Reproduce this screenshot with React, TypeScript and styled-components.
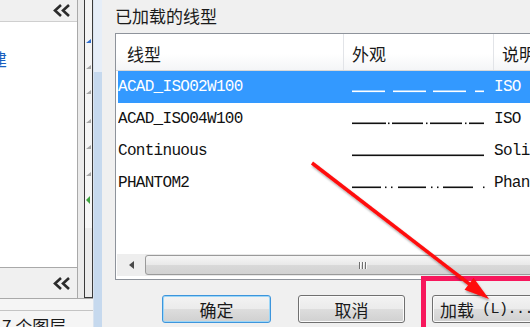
import React from "react";
import styled, { createGlobalStyle } from "styled-components";

const GlobalStyle = createGlobalStyle`
  html, body {
    margin: 0;
    padding: 0;
    background: #f0f0f0;
  }
  body {
    font-family: "Noto Sans CJK SC", "Noto Sans", sans-serif;
    color: #1a1a1a;
  }
`;

const Screen = styled.div`
  position: relative;
  width: 530px;
  height: 327px;
  overflow: hidden;
  display: flex;
  background: #f0f0f0;
`;

/* ---------- left side (layer panel) ---------- */

const Sidebar = styled.div`
  width: 93px;
  flex-shrink: 0;
  display: flex;
  flex-direction: column;
`;

const SideMain = styled.div`
  display: flex;
  height: 298px;
`;

const Panel = styled.div`
  width: 77px;
  display: flex;
  flex-direction: column;
  border-right: 1px solid #a9a9a9;
`;

const PanelBar = styled.div<{ $top?: boolean }>`
  height: ${(p) => (p.$top ? 21 : 30)}px;
  display: flex;
  justify-content: flex-end;
  align-items: ${(p) => (p.$top ? "flex-start" : "center")};
  padding-right: 5px;
  background: #f0f0f0;
`;

const PanelList = styled.div`
  flex: 1;
  background: #fff;
  border-top: 1px solid #cfcfcf;
  border-bottom: 1px solid #a9a9a9;
  overflow: hidden;
`;

const ClippedName = styled.div`
  margin: 27px 0 0 -10px;
  font-size: 17px;
  line-height: 20px;
  color: #1a5fc0;
`;

const Gutter = styled.div`
  width: 6px;
  background: #ebebeb;
`;

const Ruler = styled.div`
  width: 7px;
  border: 1px solid #3a3a3a;
  border-top: none;
  background: linear-gradient(to bottom, #f4f4f4 0, #f7f7f7 228px, #ececec 228px);
`;

const SideBottom = styled.div`
  flex: 1;
  border-top: 1px solid #a9a9a9;
  padding-top: 11px;
  background: #f5f5f5;
`;

const Status = styled.div`
  border-top: 1px solid #c4c4c4;
  padding: 5px 0 0 2px;
  font-size: 17px;
  line-height: 20px;
  white-space: nowrap;
`;

const BlueStrip = styled.div`
  width: 8px;
  flex-shrink: 0;
  border-left: 1px solid #d9e3ef;
  background: linear-gradient(to bottom, #e6eef8 0, #e6eef8 72px, #c6d9ee 72px);
`;

/* ---------- dialog ---------- */

const Dialog = styled.div`
  flex: 1;
  min-width: 0;
  display: flex;
  flex-direction: column;
  padding-left: 13px;
`;

const Title = styled.div`
  height: 33px;
  line-height: 32px;
  font-size: 17px;
  white-space: nowrap;
`;

const ListBox = styled.div`
  width: 520px;
  height: 247px;
  box-sizing: border-box;
  flex-shrink: 0;
  border: 1px solid #8e939b;
  background: #fff;
  display: flex;
  flex-direction: column;
  padding-bottom: 3px;
`;

const HeaderRow = styled.div`
  display: grid;
  grid-template-columns: 227px 150px 1fr;
  height: 36px;
  border-bottom: 1px solid #d8d8d8;
  background: linear-gradient(to bottom, #ffffff 0%, #ffffff 55%, #f4f5f7 100%);
`;

const HeadCell = styled.div<{ $pad: number; $sep?: boolean }>`
  display: flex;
  align-items: center;
  padding-left: ${(p) => p.$pad}px;
  padding-top: 2px;
  font-size: 17px;
  white-space: nowrap;
  border-left: ${(p) => (p.$sep ? "1px solid #e2e4e8" : "none")};
`;

const Row = styled.div<{ $selected?: boolean }>`
  display: grid;
  grid-template-columns: 225px 150px 1fr;
  height: 32px;
  margin-left: 2px;
  background: ${(p) => (p.$selected ? "#3399ff" : "transparent")};
  color: ${(p) => (p.$selected ? "#ffffff" : "#111111")};
  font-family: "Liberation Mono", "DejaVu Sans Mono", monospace;
  font-size: 16px;
  letter-spacing: -0.7px;
  white-space: nowrap;
`;

const Cell = styled.div<{ $pad?: number }>`
  display: flex;
  align-items: center;
  padding-left: ${(p) => p.$pad ?? 0}px;
  overflow: hidden;
`;

const Filler = styled.div`
  flex: 1;
`;

const HScroll = styled.div`
  height: 22px;
  display: flex;
  background: #e9e9e9;
  margin-left: 1px;
`;

const ArrowButton = styled.div`
  width: 28px;
  display: flex;
  align-items: center;
  justify-content: center;
  background: #eeeeee;
`;

const Thumb = styled.div`
  width: 434px;
  flex-shrink: 0;
  margin: 1px 0;
  box-sizing: border-box;
  border: 1px solid #9a9a9a;
  border-radius: 3px;
  background: linear-gradient(to bottom, #f6f6f6 0%, #e9e9e9 50%, #d9d9d9 51%, #d2d2d2 100%);
  display: flex;
  align-items: center;
  justify-content: center;
`;

const Grip = styled.div`
  display: flex;
  gap: 2px;
  span {
    width: 1px;
    height: 7px;
    background: #6f6f6f;
    box-shadow: 1px 0 0 #fafafa;
  }
`;

const ButtonRow = styled.div`
  display: flex;
  gap: 27px;
  margin-top: 15px;
  padding-left: 47px;
`;

const Button = styled.div<{ $w: number; $default?: boolean; $start?: boolean }>`
  width: ${(p) => p.$w}px;
  height: 28px;
  flex-shrink: 0;
  box-sizing: border-box;
  display: flex;
  align-items: center;
  justify-content: ${(p) => (p.$start ? "flex-start" : "center")};
  padding-left: ${(p) => (p.$start ? 7 : 0)}px;
  border: 1px solid ${(p) => (p.$default ? "#3d95dc" : "#707070")};
  border-radius: 3px;
  box-shadow: ${(p) =>
    p.$default ? "inset 0 0 0 1px #9cd6f7" : "inset 0 0 0 1px #fbfbfb"};
  background: linear-gradient(to bottom, #f3f3f3 0%, #ebebeb 50%, #dddddd 51%, #d0d0d0 100%);
  font-size: 17px;
  white-space: nowrap;
`;

const Mono = styled.span`
  font-family: "Liberation Mono", "DejaVu Sans Mono", monospace;
  font-size: 15px;
  margin-left: 8px;
  letter-spacing: -0.5px;
`;

const Overlay = styled.svg`
  position: absolute;
  left: 0;
  top: 0;
  pointer-events: none;
`;

/* ---------- small drawings ---------- */

const DoubleChevron = () => (
  <svg width="19" height="13" viewBox="0 0 19 13">
    <path d="M8 1 L2 6.5 L8 12 M16 1 L10 6.5 L16 12" fill="none" stroke="#2b2b2b" strokeWidth="2.6" />
  </svg>
);

const rulerMarks = [42, 68, 93, 122, 148, 175];

const RulerMarks = () => (
  <svg width="7" height="298" viewBox="0 0 7 298">
    {rulerMarks.map((y, i) => (
      <polygon
        key={y}
        points={`6,${y - 3} 6,${y + 1} 1,${y + 1}`}
        fill={i === 0 ? "#2f6fd0" : "#a8a8a8"}
      />
    ))}
    <polygon points="1,200 5,196 5,204" fill="#3fa43f" />
  </svg>
);

type Seg = [number, number];

const patterns: Record<string, Seg[]> = {
  iso02: [[0, 33], [41, 74], [81, 114], [123, 132]],
  iso04: [[0, 34], [36, 37.5], [40, 71], [74, 75.5], [78, 110], [113, 114.5], [117, 132]],
  solid: [[0, 132]],
  phantom: [[0, 29], [33, 34.5], [39, 40.5], [46, 74], [79, 80.5], [85, 86.5], [91, 121], [131, 132.5]],
};

const LinePattern = ({ kind }: { kind: string }) => (
  <svg width="134" height="32" viewBox="0 0 134 32">
    {patterns[kind].map(([a, b]) => (
      <rect key={a} x={a} y={19.5} width={b - a} height={1.6} fill="currentColor" />
    ))}
  </svg>
);

const lineTypes = [
  { name: "ACAD_ISO02W100", kind: "iso02", desc: "ISO dash __ __ __ __ __" },
  { name: "ACAD_ISO04W100", kind: "iso04", desc: "ISO long-dash dot ____ ." },
  { name: "Continuous", kind: "solid", desc: "Solid line" },
  { name: "PHANTOM2", kind: "phantom", desc: "Phantom (.5x) ___ _ _ ___" },
];

// arrow geometry (annotation drawn over the dialog)
const tip = { x: 489, y: 299 };
const ux = 0.796;
const uy = 0.605;
const base = { x: tip.x - 25 * ux, y: tip.y - 25 * uy };
const wing = 7.5;

const App = () => (
  <>
    <GlobalStyle />
    <Screen>
      <Sidebar>
        <SideMain>
          <Panel>
            <PanelBar $top>
              <div style={{ marginTop: -2 }}>
                <DoubleChevron />
              </div>
            </PanelBar>
            <PanelList>
              <ClippedName>建</ClippedName>
            </PanelList>
            <PanelBar>
              <DoubleChevron />
            </PanelBar>
          </Panel>
          <Gutter />
          <Ruler>
            <RulerMarks />
          </Ruler>
        </SideMain>
        <SideBottom>
          <Status>7 个图层</Status>
        </SideBottom>
      </Sidebar>

      <BlueStrip />

      <Dialog>
        <Title>已加载的线型</Title>
        <ListBox>
          <HeaderRow>
            <HeadCell $pad={11}>线型</HeadCell>
            <HeadCell $pad={8} $sep>外观</HeadCell>
            <HeadCell $pad={8} $sep>说明</HeadCell>
          </HeaderRow>
          {lineTypes.map((lt, i) => (
            <Row key={lt.name} $selected={i === 0}>
              <Cell>{lt.name}</Cell>
              <Cell $pad={9}>
                <LinePattern kind={lt.kind} />
              </Cell>
              <Cell $pad={1}>{lt.desc}</Cell>
            </Row>
          ))}
          <Filler />
          <HScroll>
            <ArrowButton>
              <svg width="5" height="8" viewBox="0 0 5 8">
                <polygon points="5,0 5,8 0,4" fill="#4a4a4a" />
              </svg>
            </ArrowButton>
            <Thumb>
              <Grip>
                <span />
                <span />
                <span />
              </Grip>
            </Thumb>
          </HScroll>
        </ListBox>
        <ButtonRow>
          <Button $w={109} $default>确定</Button>
          <Button $w={107}>取消</Button>
          <Button $w={115} $start>
            加载<Mono>(L)...</Mono>
          </Button>
        </ButtonRow>
      </Dialog>

      <Overlay width="530" height="327" viewBox="0 0 530 327">
        <defs>
          <filter id="shade" x="-10%" y="-10%" width="130%" height="130%">
            <feDropShadow dx="1" dy="2" stdDeviation="1.2" floodColor="#000" floodOpacity="0.35" />
          </filter>
        </defs>
        <rect x="423.5" y="278.5" width="120" height="60" fill="none" stroke="#f7175c" strokeWidth="5" />
        <g filter="url(#shade)">
          <line x1="312" y1="163" x2={base.x + 2} y2={base.y + 1.5} stroke="#ff0a0a" strokeWidth="3.5" />
          <polygon
            points={`${tip.x},${tip.y} ${base.x - wing * uy},${base.y + wing * ux} ${base.x + wing * uy},${base.y - wing * ux}`}
            fill="#ff0a0a"
          />
        </g>
      </Overlay>
    </Screen>
  </>
);

export default App;
